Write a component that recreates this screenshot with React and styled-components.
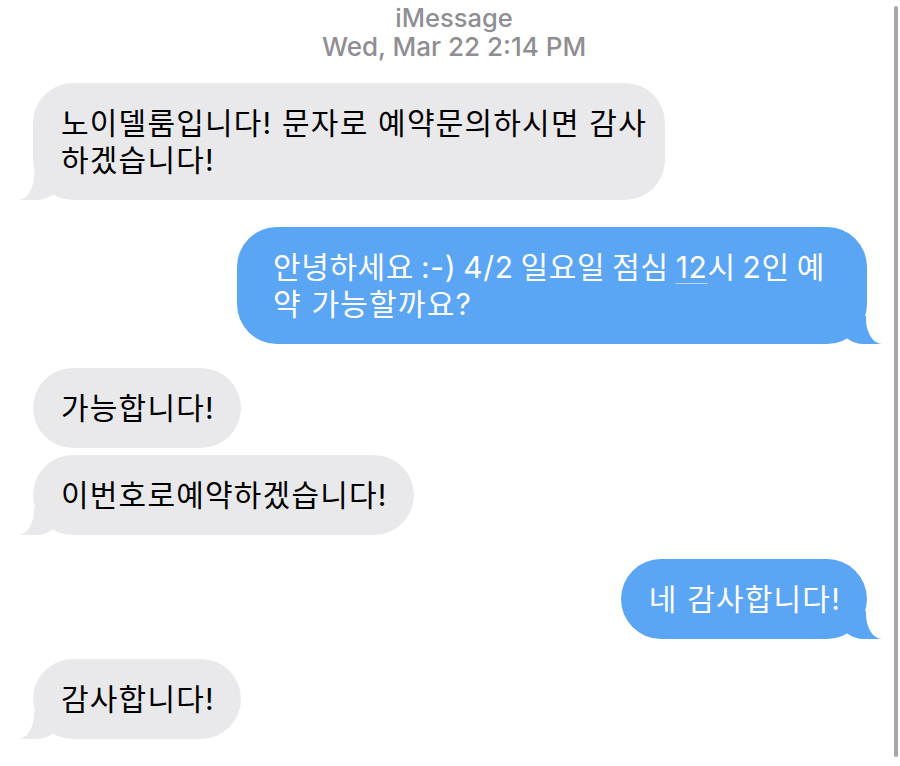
import styled, { createGlobalStyle, css } from "styled-components";

const GlobalStyle = createGlobalStyle`
  html, body {
    margin: 0;
    padding: 0;
    background: #fff;
  }
  body {
    width: 900px;
    height: 766px;
    overflow: hidden;
  }
`;

const GRAY = "#e9e9eb";
const BLUE = "#5ba5f5";

const thread = [
  { from: "them", tail: true, gap: 22, width: 632, lines: ["노이델룸입니다! 문자로 예약문의하시면 감사", "하겠습니다!"] },
  { from: "me", tail: true, gap: 27, width: 630, inset: 36, lines: ["__link", "약 가능할까요?"] },
  { from: "them", gap: 24, lines: ["가능합니다!"] },
  { from: "them", tail: true, gap: 7, lines: ["이번호로예약하겠습니다!"] },
  { from: "me", tail: true, gap: 24, lines: ["네 감사합니다!"] },
  { from: "them", tail: true, gap: 20, lines: ["감사합니다!"] },
];

export default function App() {
  return (
    <>
      <GlobalStyle />
      <Page>
        <Thread>
          <Header>
            <Service>iMessage</Service>
            <Stamp>Wed, Mar 22 2:14 PM</Stamp>
          </Header>
          {thread.map((m, i) => (
            <Row key={i} $mine={m.from === "me"} $gap={m.gap}>
              <Bubble $mine={m.from === "me"} $tail={m.tail} $width={m.width} $inset={m.inset}>
                {m.lines.map((line, j) =>
                  line === "__link" ? (
                    <Line key={j} $tight>
                      안녕하세요 :-) 4/2 일요일 점심 <Detected>12</Detected>시 2인 예
                    </Line>
                  ) : (
                    <Line key={j}>{line}</Line>
                  )
                )}
              </Bubble>
            </Row>
          ))}
        </Thread>
        <ScrollBar />
      </Page>
    </>
  );
}

const Page = styled.div`
  display: flex;
  height: 766px;
  font-family: Inter, "Noto Sans CJK KR", sans-serif;
`;

const Thread = styled.div`
  flex: 1;
  display: flex;
  flex-direction: column;
`;

const ScrollBar = styled.div`
  width: 4px;
  margin: 6px 2px 9px 0;
  border-radius: 2px;
  background: #a6a6a6;
`;

const Header = styled.header`
  display: flex;
  flex-direction: column;
  align-items: center;
  padding: 3px 0 0 14px;
  color: #8e8e93;
  font-size: 26px;
  line-height: 29px;
  font-weight: 500;
`;

const Service = styled.span`
  font-size: 25.5px;
`;

const Stamp = styled.span``;

const Row = styled.div`
  display: flex;
  justify-content: ${(p) => (p.$mine ? "flex-end" : "flex-start")};
  padding: 0 27px 0 33px;
  margin-top: ${(p) => p.$gap}px;
`;

const leftTail = css`
  &::before {
    content: "";
    position: absolute;
    bottom: 0;
    left: -15px;
    width: 42px;
    height: 28px;
    background: ${GRAY};
    border-bottom-right-radius: 24px 20px;
  }
  &::after {
    content: "";
    position: absolute;
    bottom: 0;
    left: -21px;
    width: 22px;
    height: 30px;
    background: #fff;
    border-bottom-right-radius: 16px 25px;
  }
`;

const rightTail = css`
  &::before {
    content: "";
    position: absolute;
    bottom: 0;
    right: -15px;
    width: 42px;
    height: 28px;
    background: ${BLUE};
    border-bottom-left-radius: 24px 20px;
  }
  &::after {
    content: "";
    position: absolute;
    bottom: 0;
    right: -21px;
    width: 22px;
    height: 30px;
    background: #fff;
    border-bottom-left-radius: 16px 25px;
  }
`;

const Bubble = styled.div`
  position: relative;
  box-sizing: border-box;
  width: ${(p) => (p.$width ? `${p.$width}px` : "auto")};
  padding: 21.5px 26px 21.5px ${(p) => p.$inset || 28}px;
  border-radius: 40px;
  background: ${(p) => (p.$mine ? BLUE : GRAY)};
  color: ${(p) => (p.$mine ? "#fff" : "#000")};
  font-size: 30px;
  letter-spacing: 1.2px;
  line-height: 37px;
  white-space: nowrap;
  ${(p) => p.$tail && (p.$mine ? rightTail : leftTail)}
`;

const Line = styled.span`
  display: block;
  letter-spacing: ${(p) => (p.$tight ? "0.6px" : "inherit")};
  word-spacing: ${(p) => (p.$tight ? "-2px" : "normal")};
`;

const Detected = styled.span`
  text-decoration: underline;
  text-decoration-color: rgba(255, 255, 255, 0.6);
  text-decoration-thickness: 1px;
  text-underline-offset: 5px;
`;
